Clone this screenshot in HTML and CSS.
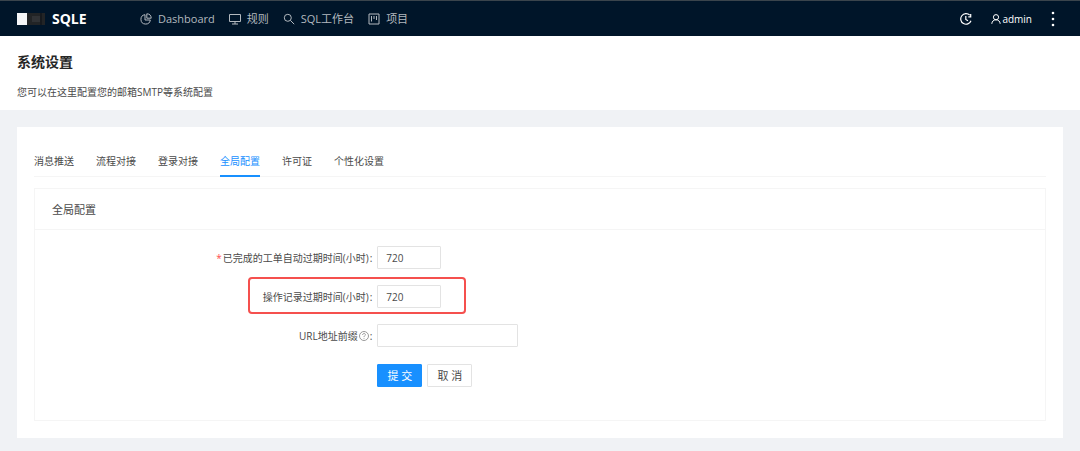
FILE: index.html
```html
<!DOCTYPE html>
<html lang="zh-CN">
<head>
  <meta charset="UTF-8">
  <meta name="viewport" content="width=device-width, initial-scale=1.0">
  <title>SQLE</title>
  <link rel="stylesheet" href="styles.css">
</head>
<body>
  <header class="header">
    <div class="logo">
      <svg width="28" height="12" viewBox="0 0 28 12">
        <rect width="10" height="12" fill="#f5f6f8"/>
        <rect x="10" width="18" height="12" fill="#222426"/>
        <rect x="15" y="3" width="8" height="6" fill="#303235"/>
        <rect x="23" width="2" height="12" fill="#16191d"/>
      </svg>
      <span>SQLE</span>
    </div>
    <nav class="menu">
      <a href="#">
        <svg class="icon" viewBox="0 0 12 12"><path d="M5 1.7A4.7 4.7 0 1 0 10.3 7H5z"/><path d="M6.8.8v4.4h4.4A4.5 4.5 0 0 0 6.8.8z"/></svg>
        Dashboard
      </a>
      <a href="#">
        <svg class="icon" viewBox="0 0 12 12"><path d="M.5 1.5h11v7H.5zM6 8.5V11M3 11h6"/></svg>
        规则
      </a>
      <a href="#">
        <svg class="icon" viewBox="0 0 12 12"><circle cx="4.8" cy="4.8" r="3.5"/><path d="M7.4 7.4l3.8 3.8"/></svg>
        SQL工作台
      </a>
      <a href="#">
        <svg class="icon" viewBox="0 0 12 12"><path d="M1 1h10v10H1zM3.5 3v5.5M6 3v3M8.5 3v4"/></svg>
        项目
      </a>
    </nav>
    <div class="header-right">
      <button class="icon-button" aria-label="最近">
        <svg class="recent" width="12" height="12" viewBox="0 0 12 12"><path d="M9.8 2.2A5.3 5.3 0 1 0 11 7.8M10.7 1v2.8H8.3M5.8 3v3.4L8 7.8"/></svg>
      </button>
      <a class="user" href="#">
        <svg width="10" height="10" viewBox="0 0 10 10"><circle cx="5" cy="3.2" r="2.6"/><path d="M.8 9.8C1 7.3 2.6 5.8 5 5.8s4 1.5 4.2 4"/></svg>
        admin
      </a>
      <button class="icon-button" aria-label="更多">
        <svg class="more" width="4" height="16" viewBox="0 0 4 16"><circle cx="2" cy="2" r="1.3"/><circle cx="2" cy="8" r="1.3"/><circle cx="2" cy="14" r="1.3"/></svg>
      </button>
    </div>
  </header>

  <section class="page-header">
    <h1>系统设置</h1>
    <p>您可以在这里配置您的邮箱SMTP等系统配置</p>
  </section>

  <main class="content">
    <div class="panel">
      <nav class="tabs">
        <a href="#">消息推送</a>
        <a href="#">流程对接</a>
        <a href="#">登录对接</a>
        <a href="#" class="active">全局配置</a>
        <a href="#">许可证</a>
        <a href="#">个性化设置</a>
      </nav>
      <section class="card">
        <h2>全局配置</h2>
        <form class="form">
          <div class="form-item">
            <label class="required" for="workflow">已完成的工单自动过期时间(小时)</label>
            <input class="short" id="workflow" type="text" value="720">
          </div>
          <div class="form-item marked">
            <label for="record">操作记录过期时间(小时)</label>
            <input class="short" id="record" type="text" value="720">
          </div>
          <div class="form-item">
            <label for="url">URL地址前缀
              <svg class="help" width="10" height="10" viewBox="0 0 10 10"><circle cx="5" cy="5" r="4.5"/><path d="M3.6 4c0-2 2.8-2 2.8-.3C6.4 4.8 5 4.7 5 6M5 6.9v.8"/></svg></label>
            <input id="url" type="text">
          </div>
          <div class="buttons">
            <button class="primary" type="submit">提 交</button>
            <button type="button">取 消</button>
          </div>
        </form>
      </section>
    </div>
  </main>
</body>
</html>
```

FILE: styles.css
```css
* {
  box-sizing: border-box;
}
body {
  margin: 0;
  font-family: "Open Sans", "Noto Sans CJK SC", sans-serif;
  font-size: 10px;
  line-height: 16px;
  color: #4a4a4a;
  background: #f0f2f5;
}
a {
  color: inherit;
  text-decoration: none;
}
svg {
  fill: none;
  stroke: currentColor;
}

/* header */
.header {
  display: flex;
  align-items: center;
  height: 36px;
  padding: 0 25px 0 17px;
  border-top: 1px solid #3a444c;
  background: #001529;
  color: #fff;
}
.logo {
  display: flex;
  align-items: center;
  gap: 7px;
  width: 123px;
  font-size: 14px;
  font-weight: bold;
}
.logo svg {
  stroke: none;
}
.menu {
  display: flex;
  gap: 14px;
  font-size: 11px;
  color: #b3b9bf;
}
.menu a {
  display: flex;
  align-items: center;
  gap: 6px;
}
.icon {
  width: 12px;
  height: 12px;
}
.header-right {
  display: flex;
  align-items: center;
  gap: 19px;
  margin-left: auto;
}
.icon-button {
  display: flex;
  padding: 0;
  border: 0;
  background: none;
  color: #fff;
}
.recent {
  stroke-width: 1.2;
}
.user {
  display: flex;
  align-items: center;
  gap: 1px;
}
.more {
  fill: #fff;
  stroke: none;
}

/* page header */
.page-header {
  padding: 16px 17px 10px;
  background: #fff;
}
.page-header h1 {
  margin: 0 0 12px;
  font-size: 14px;
  line-height: 20px;
  color: #262626;
}
.page-header p {
  margin: 0;
}

/* content */
.content {
  padding: 17px 17px 13px;
}
.panel {
  padding: 17px;
  background: #fff;
}
.tabs {
  display: flex;
  gap: 22px;
  margin-bottom: 11px;
  border-bottom: 1px solid #f5f5f5;
}
.tabs a {
  margin-bottom: -1px;
  padding: 9px 0 6px;
  border-bottom: 2px solid transparent;
}
.tabs .active {
  color: #1890ff;
  border-color: #1890ff;
}
.card {
  border: 1px solid #f5f5f5;
}
.card h2 {
  margin: 0;
  padding: 13px 17px 11px;
  border-bottom: 1px solid #f5f5f5;
  font-size: 11px;
  font-weight: normal;
  line-height: 16px;
}

/* form */
.form {
  padding: 16px 17px 33px;
}
.form-item {
  position: relative;
  display: grid;
  grid-template-columns: 1fr 2fr;
  align-items: center;
  margin-bottom: 16px;
}
.form-item label {
  display: flex;
  align-items: center;
  justify-content: flex-end;
  gap: 1px;
  padding-right: 5px;
}
.form-item label::after {
  content: ":";
}
.required::before {
  content: "*";
  color: #ff4d4f;
}
.form-item input {
  width: 141px;
  height: 23px;
  padding: 0 8px;
  border: 1px solid #e3e3e3;
  border-radius: 1px;
  font: inherit;
  color: inherit;
}
.form-item .short {
  width: 64px;
}
.help {
  color: #999;
}
.marked::after {
  content: "";
  position: absolute;
  top: -8px;
  bottom: -6px;
  left: calc(33.333% - 129px);
  box-sizing: border-box;
  width: 218px;
  border: 2px solid #f5504e;
  border-radius: 4px;
  pointer-events: none;
}
.buttons {
  display: flex;
  gap: 5px;
  margin: 17px 0 0 33.333%;
}
.buttons button {
  width: 45px;
  height: 23px;
  padding: 0;
  border: 1px solid #e3e3e3;
  border-radius: 1px;
  background: #fff;
  font: inherit;
  font-size: 11px;
  color: inherit;
}
.buttons .primary {
  border-color: #1890ff;
  background: #1890ff;
  color: #fff;
}
```
